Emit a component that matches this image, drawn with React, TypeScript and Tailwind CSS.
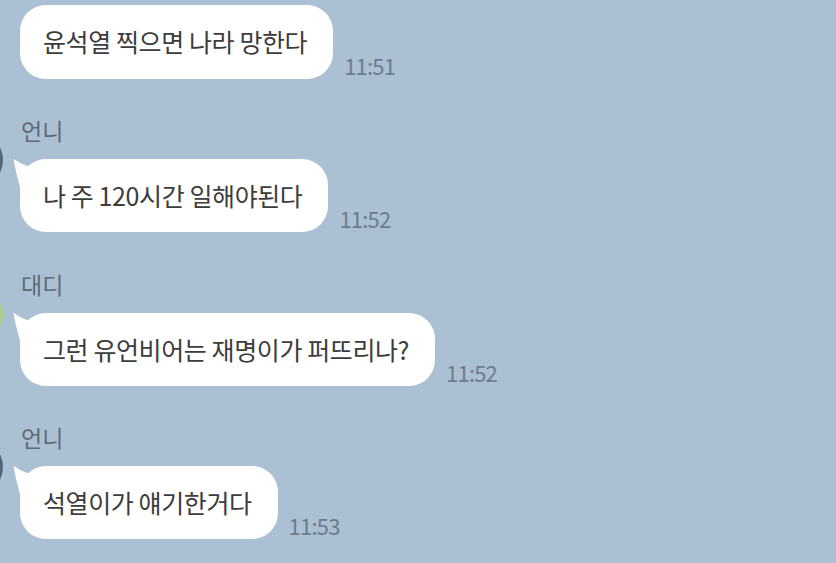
import React from "react";

const FONT = { fontFamily: '"Noto Sans CJK KR", "Noto Sans", sans-serif' };

function Tail() {
  return (
    <svg
      className="absolute left-[-8px] top-0"
      width="34"
      height="34"
      viewBox="0 0 34 34"
    >
      <path
        d="M1.5,0 C6,2.5 11,6 17,7.5 L17,34 L8,34 L8,28 C6,20 3,10 1.5,0 Z"
        fill="#ffffff"
      />
    </svg>
  );
}

function Bubble({
  text,
  time,
  tail,
  h = "h-[73px]",
}: {
  text: string;
  time: string;
  tail?: boolean;
  h?: string;
}) {
  return (
    <div className="flex items-end">
      <div
        className={`relative flex items-center ${h} rounded-[26px] bg-white pl-[23px] pr-[26px] text-[25px] tracking-[-0.4px] text-[#3c3c3c] whitespace-nowrap`}
      >
        {tail && <Tail />}
        <span className="relative">{text}</span>
      </div>
      <div className="ml-[11px] mb-[1px] text-[22px] leading-[26px] text-[#6d7d8d] tracking-[-0.8px]">
        {time}
      </div>
    </div>
  );
}

function Group({
  name,
  avatar,
  children,
  mt,
}: {
  name: string;
  avatar: string;
  children: React.ReactNode;
  mt: string;
}) {
  return (
    <div className={`flex ${mt}`}>
      <div className="relative w-[20px] shrink-0">
        <div
          className={`absolute left-[-53px] top-[14px] h-[56px] w-[56px] rounded-full ${avatar}`}
        />
      </div>
      <div className="flex flex-col">
        <div className="ml-[1px] h-[24px] text-[23px] leading-[24px] text-[#5e6a76]">
          {name}
        </div>
        <div className="mt-[17px]">{children}</div>
      </div>
    </div>
  );
}

export default function App() {
  return (
    <div
      className="relative h-[563px] w-[836px] overflow-hidden bg-[#abc0d2]"
      style={FONT}
    >
      <div className="flex flex-col pt-[5px]">
        <div className="pl-[20px]">
          <Bubble text="윤석열 찍으면 나라 망한다" time="11:51" h="h-[74px]" />
        </div>
        <Group name="언니" avatar="bg-[#55667a]" mt="mt-[39px]">
          <Bubble text="나 주 120시간 일해야된다" time="11:52" tail />
        </Group>
        <Group name="대디" avatar="bg-[#a9cf86]" mt="mt-[40px]">
          <Bubble text="그런 유언비어는 재명이가 퍼뜨리나?" time="11:52" tail />
        </Group>
        <Group name="언니" avatar="bg-[#55667a]" mt="mt-[39px]">
          <Bubble text="석열이가 얘기한거다" time="11:53" tail />
        </Group>
      </div>
    </div>
  );
}
